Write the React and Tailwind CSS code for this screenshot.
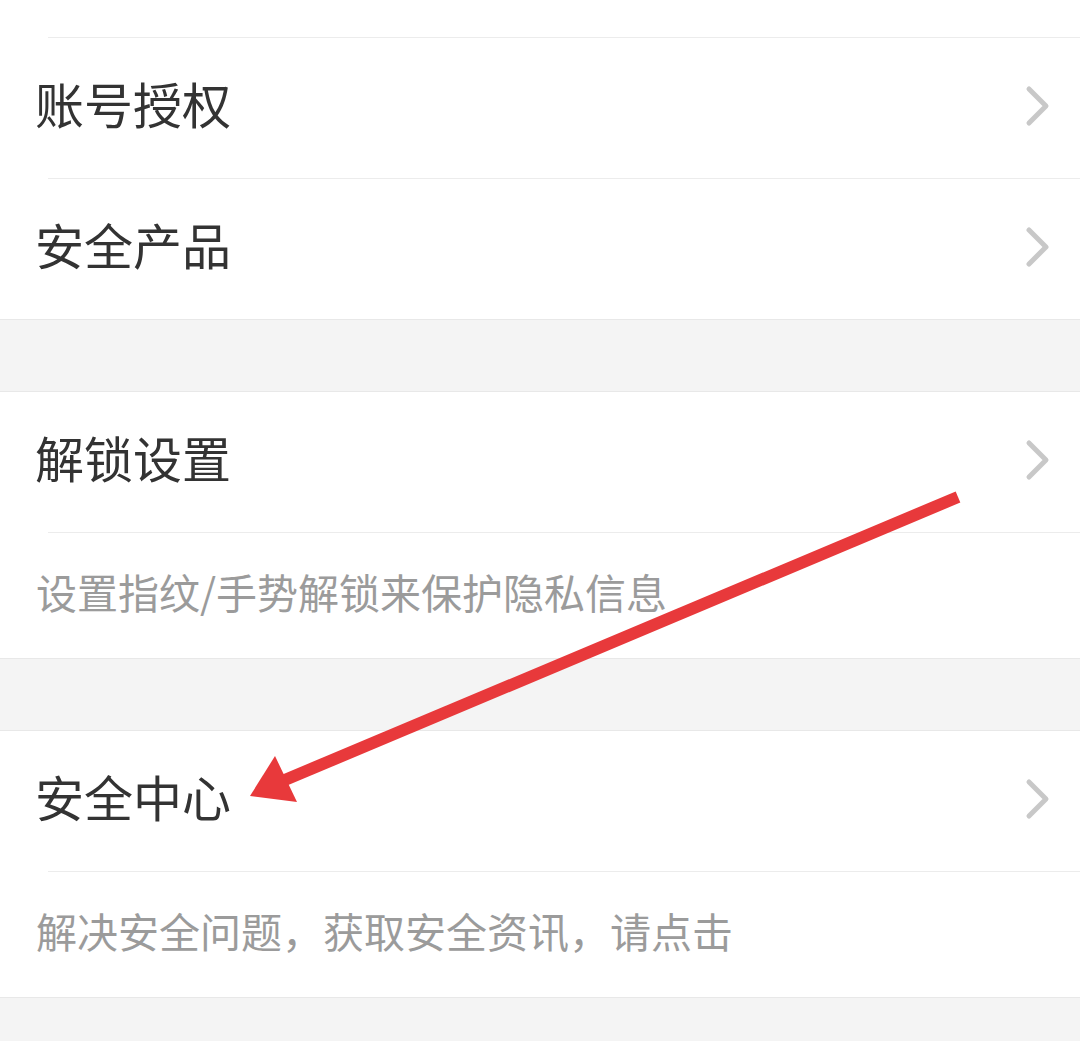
import React from "react";

const font = { fontFamily: '"Noto Sans CJK SC", "Noto Sans", sans-serif' };

const Chevron = () => (
  <svg width="28" height="44" viewBox="0 0 28 44" className="shrink-0 mb-[4px]">
    <polyline
      points="5,5 22,22 5,39"
      fill="none"
      stroke="#c8c8c8"
      strokeWidth="5"
      strokeLinecap="round"
      strokeLinejoin="round"
    />
  </svg>
);

const Row = ({ title }) => (
  <div className="flex items-center justify-between h-[140px] pl-[35px] pr-[28px]">
    <span className="text-[49px] text-[#333333] leading-none mb-[12px]">{title}</span>
    <Chevron />
  </div>
);

const Desc = ({ text }) => (
  <div className="flex items-center h-[125px] pl-[36px]">
    <span className="text-[41px] text-[#9b9b9b] leading-none mb-[9px]">{text}</span>
  </div>
);

const Divider = () => <div className="h-px bg-[#ececec] ml-[48px]"></div>;

const Gap = () => (
  <div className="h-[73px] bg-[#f4f4f4] border-y border-[#e8e8e8]"></div>
);

const Arrow = () => (
  <svg
    className="absolute left-0 top-0 pointer-events-none"
    width="1080"
    height="1041"
    viewBox="0 0 1080 1041"
  >
    <line
      x1="958"
      y1="497"
      x2="280"
      y2="782"
      stroke="#e8393b"
      strokeWidth="12"
    />
    <polygon points="250,796 275,756 297,802" fill="#e8393b" />
  </svg>
);

export default function App() {
  return (
    <div className="relative w-[1080px] h-[1041px] bg-[#f4f4f4] overflow-hidden" style={font}>
      <div className="bg-white">
        <div className="h-[37px]"></div>
        <Divider />
        <Row title="账号授权" />
        <Divider />
        <Row title="安全产品" />
      </div>
      <Gap />
      <div className="bg-white">
        <Row title="解锁设置" />
        <Divider />
        <Desc text="设置指纹/手势解锁来保护隐私信息" />
      </div>
      <Gap />
      <div className="bg-white">
        <Row title="安全中心" />
        <Divider />
        <Desc text="解决安全问题，获取安全资讯，请点击" />
      </div>
      <div className="border-t border-[#e8e8e8]"></div>
      <Arrow />
    </div>
  );
}
